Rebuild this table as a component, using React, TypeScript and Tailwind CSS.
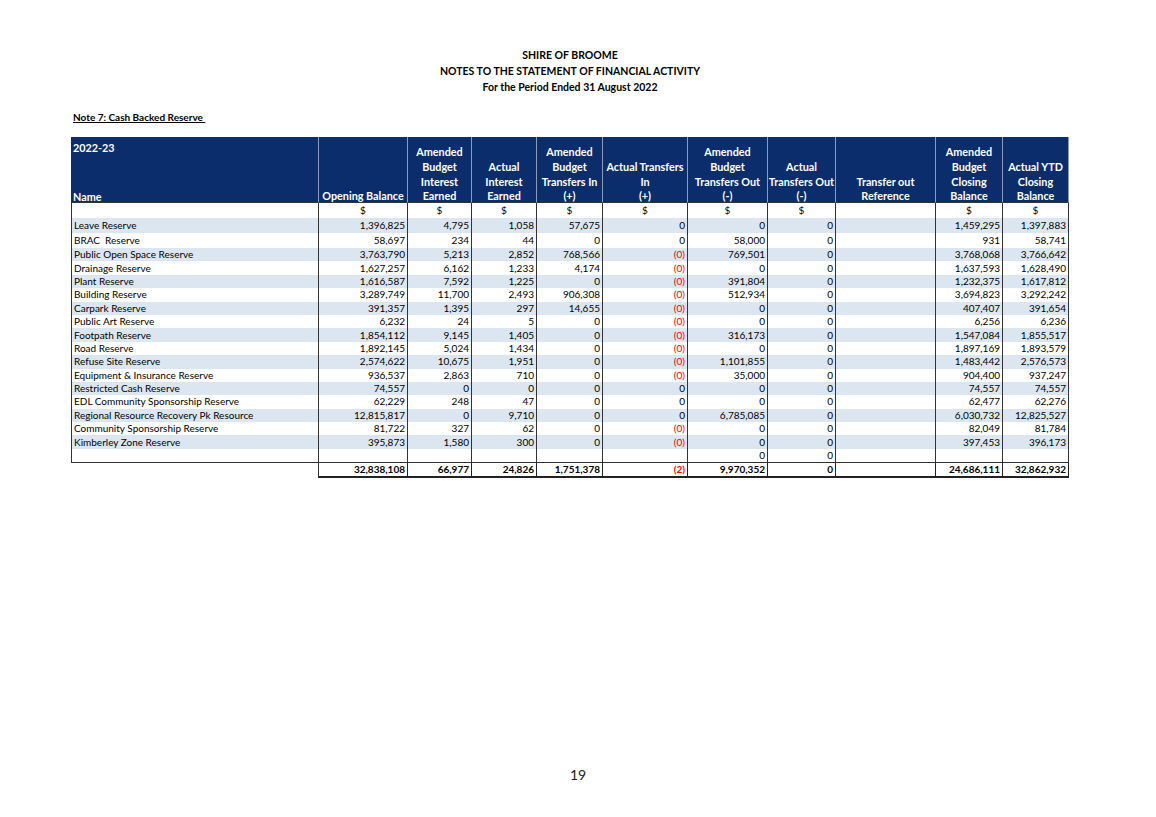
const rows: { name: string; v: string[]; h?: string }[] = [
  { name: "Leave Reserve", v: ["1,396,825", "4,795", "1,058", "57,675", "0", "0", "0", "", "1,459,295", "1,397,883"], h: "h-[15px]" },
  { name: "BRAC  Reserve", v: ["58,697", "234", "44", "0", "0", "58,000", "0", "", "931", "58,741"], h: "h-[15px]" },
  { name: "Public Open Space Reserve", v: ["3,763,790", "5,213", "2,852", "768,566", "(0)", "769,501", "0", "", "3,768,068", "3,766,642"] },
  { name: "Drainage Reserve", v: ["1,627,257", "6,162", "1,233", "4,174", "(0)", "0", "0", "", "1,637,593", "1,628,490"] },
  { name: "Plant Reserve", v: ["1,616,587", "7,592", "1,225", "0", "(0)", "391,804", "0", "", "1,232,375", "1,617,812"] },
  { name: "Building Reserve", v: ["3,289,749", "11,700", "2,493", "906,308", "(0)", "512,934", "0", "", "3,694,823", "3,292,242"] },
  { name: "Carpark Reserve", v: ["391,357", "1,395", "297", "14,655", "(0)", "0", "0", "", "407,407", "391,654"] },
  { name: "Public Art Reserve", v: ["6,232", "24", "5", "0", "(0)", "0", "0", "", "6,256", "6,236"] },
  { name: "Footpath Reserve", v: ["1,854,112", "9,145", "1,405", "0", "(0)", "316,173", "0", "", "1,547,084", "1,855,517"] },
  { name: "Road Reserve", v: ["1,892,145", "5,024", "1,434", "0", "(0)", "0", "0", "", "1,897,169", "1,893,579"] },
  { name: "Refuse Site Reserve", v: ["2,574,622", "10,675", "1,951", "0", "(0)", "1,101,855", "0", "", "1,483,442", "2,576,573"] },
  { name: "Equipment & Insurance Reserve", v: ["936,537", "2,863", "710", "0", "(0)", "35,000", "0", "", "904,400", "937,247"] },
  { name: "Restricted Cash Reserve", v: ["74,557", "0", "0", "0", "0", "0", "0", "", "74,557", "74,557"] },
  { name: "EDL Community Sponsorship Reserve", v: ["62,229", "248", "47", "0", "0", "0", "0", "", "62,477", "62,276"] },
  { name: "Regional Resource Recovery Pk Resource", v: ["12,815,817", "0", "9,710", "0", "0", "6,785,085", "0", "", "6,030,732", "12,825,527"] },
  { name: "Community Sponsorship Reserve", v: ["81,722", "327", "62", "0", "(0)", "0", "0", "", "82,049", "81,784"] },
  { name: "Kimberley Zone Reserve", v: ["395,873", "1,580", "300", "0", "(0)", "0", "0", "", "397,453", "396,173"] },
  { name: "", v: ["", "", "", "", "", "0", "0", "", "", ""] },
];

const totals = ["32,838,108", "66,977", "24,826", "1,751,378", "(2)", "9,970,352", "0", "", "24,686,111", "32,862,932"];

const headers: string[][] = [
  ["Opening Balance"],
  ["Amended", "Budget", "Interest", "Earned"],
  ["Actual", "Interest", "Earned"],
  ["Amended", "Budget", "Transfers In", "(+)"],
  ["Actual Transfers", "In", "(+)"],
  ["Amended", "Budget", "Transfers Out", "(-)"],
  ["Actual", "Transfers Out", "(-)"],
  ["Transfer out", "Reference"],
  ["Amended", "Budget", "Closing", "Balance"],
  ["Actual YTD", "Closing", "Balance"],
];

const widths = ["w-[248px]", "w-[89px]", "w-[64px]", "w-[65px]", "w-[66px]", "w-[85px]", "w-[80px]", "w-[68px]", "w-[100px]", "w-[67px]", "w-[66px]"];

const App = () => {
  return (
    <div className="flex h-[817px] w-[1156px] flex-col bg-white font-['Lato','Liberation_Sans',sans-serif] text-black">
      <div className="ml-[71px] w-[998px] pt-[47px] text-center text-[10.5px] font-bold leading-[16px]">
        <div>SHIRE OF BROOME</div>
        <div>NOTES TO THE STATEMENT OF FINANCIAL ACTIVITY</div>
        <div>For the Period Ended 31 August 2022</div>
      </div>
      <div className="ml-[73px] mt-[15px] text-[10px] font-bold leading-[14px]">
        <span className="underline">Note 7: Cash Backed Reserve&nbsp;</span>
      </div>
      <table className="ml-[71px] mt-[13px] w-[998px] table-fixed border-separate border-spacing-0 text-[10px]">
        <colgroup>
          {widths.map((w, i) => (
            <col className={w} key={i} />
          ))}
        </colgroup>
        <thead className="text-[10.8px]">
          <tr>
            <th className="h-[66px] border-b border-r border-b-[#333] border-r-[#8d9cbb] bg-[#0b2d6c] p-0 px-[2px] text-left align-top font-bold text-white">
              <div className="flex h-[65px] translate-y-[2px] flex-col justify-between pt-[1px] leading-[15px]">
                <span>2022-23</span>
                <span>Name</span>
              </div>
            </th>
            {headers.map((h, i) => (
              <th
                className="h-[66px] border-b border-r border-b-[#333] border-r-[#8d9cbb] bg-[#0b2d6c] p-0 text-center align-bottom font-bold leading-[14.7px] text-white"
                key={i}
              >
                <div className="translate-y-[2px]">
                  {h.map((l) => (
                    <div className="whitespace-nowrap" key={l}>
                      {l}
                    </div>
                  ))}
                </div>
              </th>
            ))}
          </tr>
        </thead>
        <tbody className="leading-[13px]">
          <tr>
            <td className="h-[15px] border-x border-[#333]" />
            {headers.map((_, i) => (
              <td className="h-[15px] border-r border-[#333] text-center" key={i}>
                {i === 7 ? "" : "$"}
              </td>
            ))}
          </tr>
          {rows.map((r, ri) => {
            const bg = ri % 2 === 0 && r.name !== "" ? "bg-[#dce6f1]" : "bg-white";
            const h = r.h ?? "h-[13.4px]";
            const last = ri === rows.length - 1 ? "border-b" : "";
            return (
              <tr className={bg} key={ri}>
                <td className={`${h} ${last} whitespace-pre border-x border-[#333] pl-[2px] text-left`}>{r.name}</td>
                {r.v.map((v, i) => (
                  <td
                    className={`${h} ${last} border-r border-[#333] pr-[2px] text-right ${v.startsWith("(") ? "text-[#ff0000]" : ""}`}
                    key={i}
                  >
                    {v}
                  </td>
                ))}
              </tr>
            );
          })}
          <tr className="font-bold">
            <td className="h-[14px] border-r border-[#333]" />
            {totals.map((v, i) => (
              <td
                className={`h-[14px] border-b-2 border-r border-[#222] pr-[2px] text-right ${v.startsWith("(") ? "text-[#ff0000]" : ""}`}
                key={i}
              >
                {v}
              </td>
            ))}
          </tr>
        </tbody>
      </table>
      <div className="mt-auto pb-[34px] text-center text-[14px] leading-[16px] text-[#222]">19</div>
    </div>
  );
};

export default App;
